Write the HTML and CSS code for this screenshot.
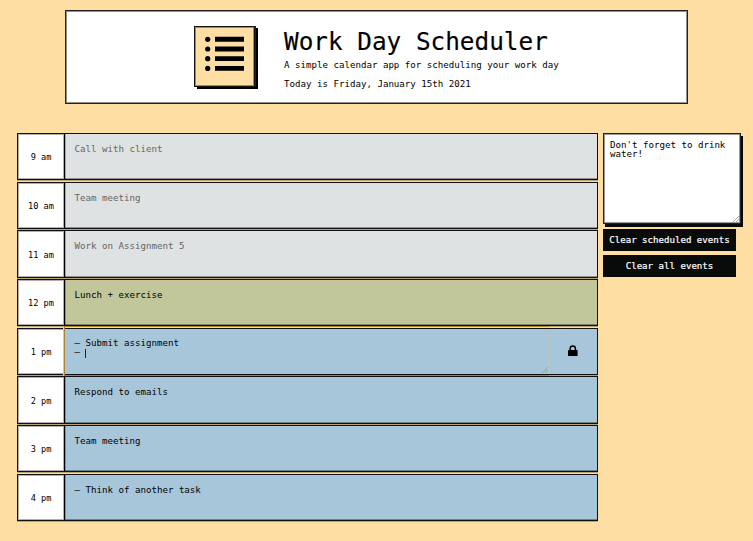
FILE: index.html
```html
<!DOCTYPE html>
<html lang="en">
<head>
<meta charset="utf-8">
<title>Work Day Scheduler</title>
<link rel="stylesheet" href="styles.css">
</head>
<body>
<header class="header">
  <div class="logo">
    <svg viewBox="0 0 62 61" width="62" height="61">
      <g fill="#000"><circle cx="13.7" cy="13.3" r="2.6"/><circle cx="13.7" cy="23" r="2.6"/><circle cx="13.7" cy="32.7" r="2.6"/><circle cx="13.7" cy="42.4" r="2.6"/>
      <path d="M21 10.8h29v4.9H21zM21 20.5h29v4.9H21zM21 30.2h29v4.9H21zM21 39.9h29v4.9H21z"/></g>
    </svg>
  </div>
  <div class="intro">
    <h1>Work Day Scheduler</h1>
    <p class="lead">A simple calendar app for scheduling your work day</p>
    <p class="today">Today is Friday, January 15th 2021</p>
  </div>
</header>
<main class="layout">
  <section class="schedule">
    <div class="row past"><div class="hour">9 am</div><div class="event">Call with client</div></div>
    <div class="row past"><div class="hour">10 am</div><div class="event">Team meeting</div></div>
    <div class="row past"><div class="hour">11 am</div><div class="event">Work on Assignment 5</div></div>
    <div class="row present"><div class="hour">12 pm</div><div class="event">Lunch + exercise</div></div>
    <div class="row future active"><div class="hour">1 pm</div><div class="event">– Submit assignment<br>– <span class="caret"></span>
      <svg class="grip" width="6" height="6" viewBox="0 0 6 6"><path d="M0 6 6 0M3 6 6 3" stroke="#8fa5b2" fill="none"/></svg></div>
      <div class="save"><svg width="10" height="12" viewBox="0 0 10 12"><rect x="0" y="5" width="9.6" height="6" rx=".4"/><path d="M2.2 5.5V3.5a2.6 2.6 0 0 1 5.2 0v2" fill="none" stroke="#000" stroke-width="1.5"/></svg></div>
    </div>
    <div class="row future"><div class="hour">2 pm</div><div class="event">Respond to emails</div></div>
    <div class="row future"><div class="hour">3 pm</div><div class="event">Team meeting</div></div>
    <div class="row future"><div class="hour">4 pm</div><div class="event">– Think of another task</div></div>
  </section>
  <aside class="side">
    <div class="note">Don't forget to drink water!<svg class="grip" width="6" height="6" viewBox="0 0 6 6"><path d="M0 6 6 0M3 6 6 3" stroke="#aaa" fill="none"/></svg></div>
    <button>Clear scheduled events</button>
    <button>Clear all events</button>
  </aside>
</main>
</body>
</html>
```
FILE: styles.css
```css
* { box-sizing: border-box; }
body {
  margin: 0;
  padding: 10px 0 0;
  height: 541px;
  overflow: hidden;
  background: #ffdea3;
  color: #000;
  font: 9.13px/10px "DejaVu Sans Mono", monospace;
}
h1, p { margin: 0; font-weight: 400; white-space: nowrap; }
.header {
  display: flex;
  width: 623px;
  height: 94px;
  margin-left: 65px;
  padding: 15px 0 0 128px;
  background: #fff;
  border: 1px solid #222;
  box-shadow: inset 0 0 0 1px #909090;
}
.logo {
  width: 61px;
  height: 61px;
  background: #ffdea3;
  border: 1px solid #111;
  box-shadow: inset 0 0 0 1px #a08b66, 1px 0 0 #222, 3px 2px 0 #000;
}
.logo svg { display: block; margin: -1px; }
.intro { margin-left: 29px; }
h1 { font-size: 24.35px; line-height: 30px; padding-top: 1px; -webkit-text-stroke: .15px #000; }
.lead { margin-top: 3px; }
.today { margin-top: 9px; }
.layout { display: flex; margin: 29px 0 0 17px; }
.schedule { display: grid; grid-auto-rows: 47.3px; gap: 1.4px; width: 581px; }
.row {
  display: flex;
  border: 1px solid #111;
  box-shadow: 0 1px 0 rgba(60, 45, 20, .35);
  position: relative;
}
.hour {
  display: flex;
  align-items: center;
  justify-content: center;
  width: 47px;
  padding-top: 1px;
  background: #fff;
  border-right: 1px solid #000;
  box-shadow: inset 0 0 0 1px #b0b0b0;
  font-size: 8.6px;
}
.event {
  flex: 1;
  padding: 10px 9.5px;
  position: relative;
  line-height: 10px;
  box-shadow: inset 0 -1px 0 rgba(0, 0, 0, .35), inset 1px 0 0 rgba(0, 0, 0, .25);
}
.past { background: #dee2e2; }
.past .event { color: #666; }
.present { background: #c1c69b; }
.future { background: #a8c6d9; }
.active { z-index: 1; }
.active .event { line-height: 9px; box-shadow: inset -1px 0 0 #b8c5c4; }
.active .event::before {
  content: "";
  position: absolute;
  inset: -3px 0 -2px -1px;
  border: solid #b08230;
  border-width: 1px 0 1px 1px;
  box-shadow: -1px 0 0 #f0c679;
  pointer-events: none;
}
.caret { display: inline-block; width: 1px; height: 9px; background: #222; vertical-align: -1px; margin: -2px 0 -2px -1px; }
.save { display: flex; align-items: center; justify-content: center; width: 48px; }
.grip { position: absolute; right: 1px; bottom: 1px; }
.side { width: 138px; margin-left: 5px; }
.note {
  position: relative;
  height: 91px;
  padding: 7px 6px 6px;
  line-height: 9px;
  background: #fff;
  border: 1px solid #222;
  box-shadow: inset 0 0 0 1px #999, 2px 3px 0 #080b0b;
}
button {
  display: block;
  width: 133px;
  height: 22px;
  margin: 5px 0 0;
  padding: 0;
  border: 0;
  background: #090b0b;
  color: #fff;
  font: 9.1px/22px "DejaVu Sans Mono", monospace;
  -webkit-text-stroke: .2px #fff;
  white-space: nowrap;
}
button + button { margin-top: 4px; }
```
